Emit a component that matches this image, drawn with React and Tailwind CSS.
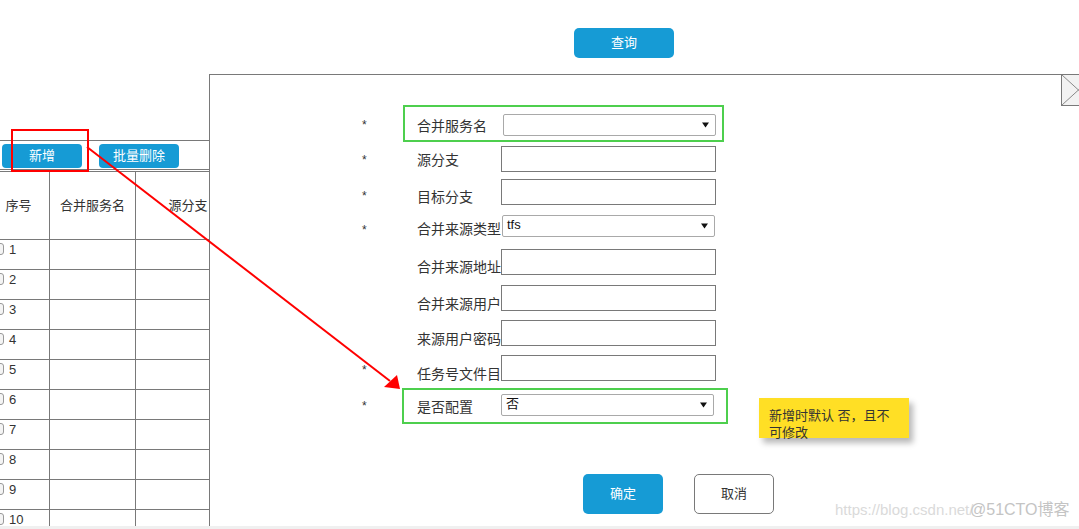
import React from "react";

const rows = [
  { star: true, label: "合并服务名", type: "select", value: "", row: "h-[22px] mt-0", lab: "pt-[2px]", st: "pt-0", box: "ml-[2px] w-[213px]", green: "left-[41px] top-[-9px] w-[321px] h-[37px]" },
  { star: true, label: "源分支", type: "input", row: "h-[26px] mt-[10px]", lab: "pt-[2px]", st: "pt-[2px]", box: "w-[215px]" },
  { star: true, label: "目标分支", type: "input", row: "h-[26px] mt-[7px]", lab: "pt-[10px]", st: "pt-[8px]", box: "w-[215px]" },
  { star: true, label: "合并来源类型", type: "select", value: "tfs", row: "h-[22px] mt-[10px]", lab: "pt-[5px]", st: "pt-[7px]", box: "ml-[1px] w-[213px]" },
  { star: false, label: "合并来源地址", type: "input", row: "h-[26px] mt-[12px]", lab: "pt-[10px]", st: "pt-0", box: "w-[215px]" },
  { star: false, label: "合并来源用户", type: "input", row: "h-[26px] mt-[10px]", lab: "pt-[12px]", st: "pt-0", box: "w-[215px]" },
  { star: false, label: "来源用户密码", type: "input", row: "h-[26px] mt-[9px]", lab: "pt-[12px]", st: "pt-0", box: "w-[215px]" },
  { star: true, label: "任务号文件目", type: "input", row: "h-[26px] mt-[9px]", lab: "pt-[12px]", st: "pt-[4px]", box: "w-[215px]" },
  { star: true, label: "是否配置", type: "select", value: "否", row: "h-[22px] mt-[13px]", lab: "pt-[4px]", st: "pt-[1px]", box: "w-[213px]", green: "left-[40px] top-[-6px] w-[326px] h-[36px]" },
];

function Caret() {
  return (
    <svg width="7" height="6" viewBox="0 0 7 6" className="shrink-0">
      <polygon points="0,0.5 7,0.5 3.5,5.5" fill="#111" />
    </svg>
  );
}

export default function App() {
  return (
    <div className="relative w-[1079px] h-[529px] overflow-hidden bg-white font-['Liberation_Sans','Noto_Sans_CJK_SC',sans-serif] text-[13px] text-[#333]">
      {/* top bar */}
      <div className="h-[74px] pt-[28px] pl-[574px]">
        <button className="w-[100px] h-[30px] rounded-[5px] bg-[#169BD5] text-white text-[13px] leading-[30px]">
          查询
        </button>
      </div>

      <div className="flex h-[452px]">
        {/* left list panel */}
        <div className="w-[209px] shrink-0 overflow-hidden pt-[66px]">
          <div className="h-[30px] border-t border-b border-[#797979] pt-[3px] pl-[2px] flex items-start gap-[17px]">
            <button className="w-[80px] h-[24px] rounded-[4px] bg-[#169BD5] text-white text-[13px] leading-[24px]">新增</button>
            <button className="w-[80px] h-[24px] rounded-[4px] bg-[#169BD5] text-white text-[13px] leading-[24px]">批量删除</button>
          </div>
          <div className="mt-[1px] ml-[-12px] w-[252px]">
            <div className="flex h-[69px] border-t border-b border-[#797979]">
              <div className="w-[62px] border-r border-[#797979] flex items-center justify-center">序号</div>
              <div className="w-[86px] border-r border-[#797979] flex items-center justify-center">合并服务名</div>
              <div className="flex-1 flex items-center justify-center">源分支</div>
            </div>
            {[1, 2, 3, 4, 5, 6, 7, 8, 9, 10].map((n) => (
              <div key={n} className="flex h-[30px] border-b border-[#797979]">
                <div className="w-[62px] border-r border-[#797979] flex items-start pl-[4px] pt-[3px] gap-[5px]">
                  <span className="w-[12px] h-[12px] rounded-[3px] border border-[#9a9a9a] bg-[#f4f4f4] shrink-0" />
                  <span className="leading-[13px] text-[13px] text-[#333]">{n}</span>
                </div>
                <div className="w-[86px] border-r border-[#797979]" />
                <div className="flex-1" />
              </div>
            ))}
          </div>
        </div>

        {/* dialog */}
        <div className="relative flex-1 border-l border-t border-[#797979] pt-[39px]">
          <div className="absolute right-0 top-[-1px] w-[18px] h-[32px] bg-[#f2f2f2] border-l border-t border-b border-[#797979] overflow-hidden">
            <svg width="18" height="30" viewBox="0 0 18 30" className="block">
              <line x1="0" y1="0" x2="34" y2="31" stroke="#8a8a8a" strokeWidth="1" />
              <line x1="0" y1="30" x2="34" y2="-1" stroke="#8a8a8a" strokeWidth="1" />
            </svg>
          </div>

          <div className="pl-[152px] flex flex-col">
            {rows.map((r) => (
              <div key={r.label} className={`relative flex items-center ${r.row}`}>
                {r.green && <div className={`absolute border-2 border-[#4dcf4d] ${r.green}`} />}
                <span className={`w-[55px] shrink-0 text-[12px] leading-[14px] text-[#333] ${r.st}`}>{r.star ? "*" : ""}</span>
                <span className={`w-[84px] shrink-0 whitespace-nowrap text-[14px] leading-[18px] text-[#333] ${r.lab}`}>{r.label}</span>
                {r.type === "input" ? (
                  <div className={`h-full border border-[#797979] bg-white ${r.box}`} />
                ) : (
                  <div className={`relative h-full border border-[#a9a9a9] rounded-[2px] bg-white flex items-center justify-between pl-[4px] pr-[6px] ${r.box}`}>
                    <span className="text-[13px] leading-[16px] text-[#111] pb-[3px]">{r.value}</span>
                    <Caret />
                  </div>
                )}
              </div>
            ))}
          </div>

          <div className="mt-[58px] pl-[373px] flex gap-[31px]">
            <button className="w-[80px] h-[40px] rounded-[5px] bg-[#169BD5] text-white text-[13px]">确定</button>
            <button className="w-[80px] h-[40px] rounded-[5px] bg-white border border-[#797979] text-[#333] text-[13px]">取消</button>
          </div>
        </div>
      </div>

      <div className="h-[3px] bg-[#f0f0f0]" />

      {/* annotations */}
      <div className="absolute left-[11px] top-[129px] w-[78px] h-[43px] border-2 border-[#ff0000]" />
      <svg className="absolute left-0 top-0 pointer-events-none" width="1079" height="529">
        <line x1="87" y1="147" x2="390" y2="381" stroke="#ff0000" strokeWidth="2" />
        <polygon points="400,389 384,387 397,375" fill="#ff0000" />
      </svg>

      <div className="absolute left-[759px] top-[398px] w-[150px] h-[40px] bg-[#FFDF25] px-[10px] pt-[9px] text-[13px] leading-[17px] text-[#333] shadow-[4px_5px_6px_rgba(0,0,0,0.28)]">
        新增时默认 否，且不可修改
      </div>

      <div className="absolute left-[835px] top-[500px] text-[15px] leading-[20px] text-[#dadada] whitespace-nowrap">
        https://blog.csdn.net/
      </div>
      <div className="absolute left-[970px] top-[500px] text-[16px] leading-[20px] text-[#c4c4c4] whitespace-nowrap">
        @51CTO博客
      </div>
    </div>
  );
}
